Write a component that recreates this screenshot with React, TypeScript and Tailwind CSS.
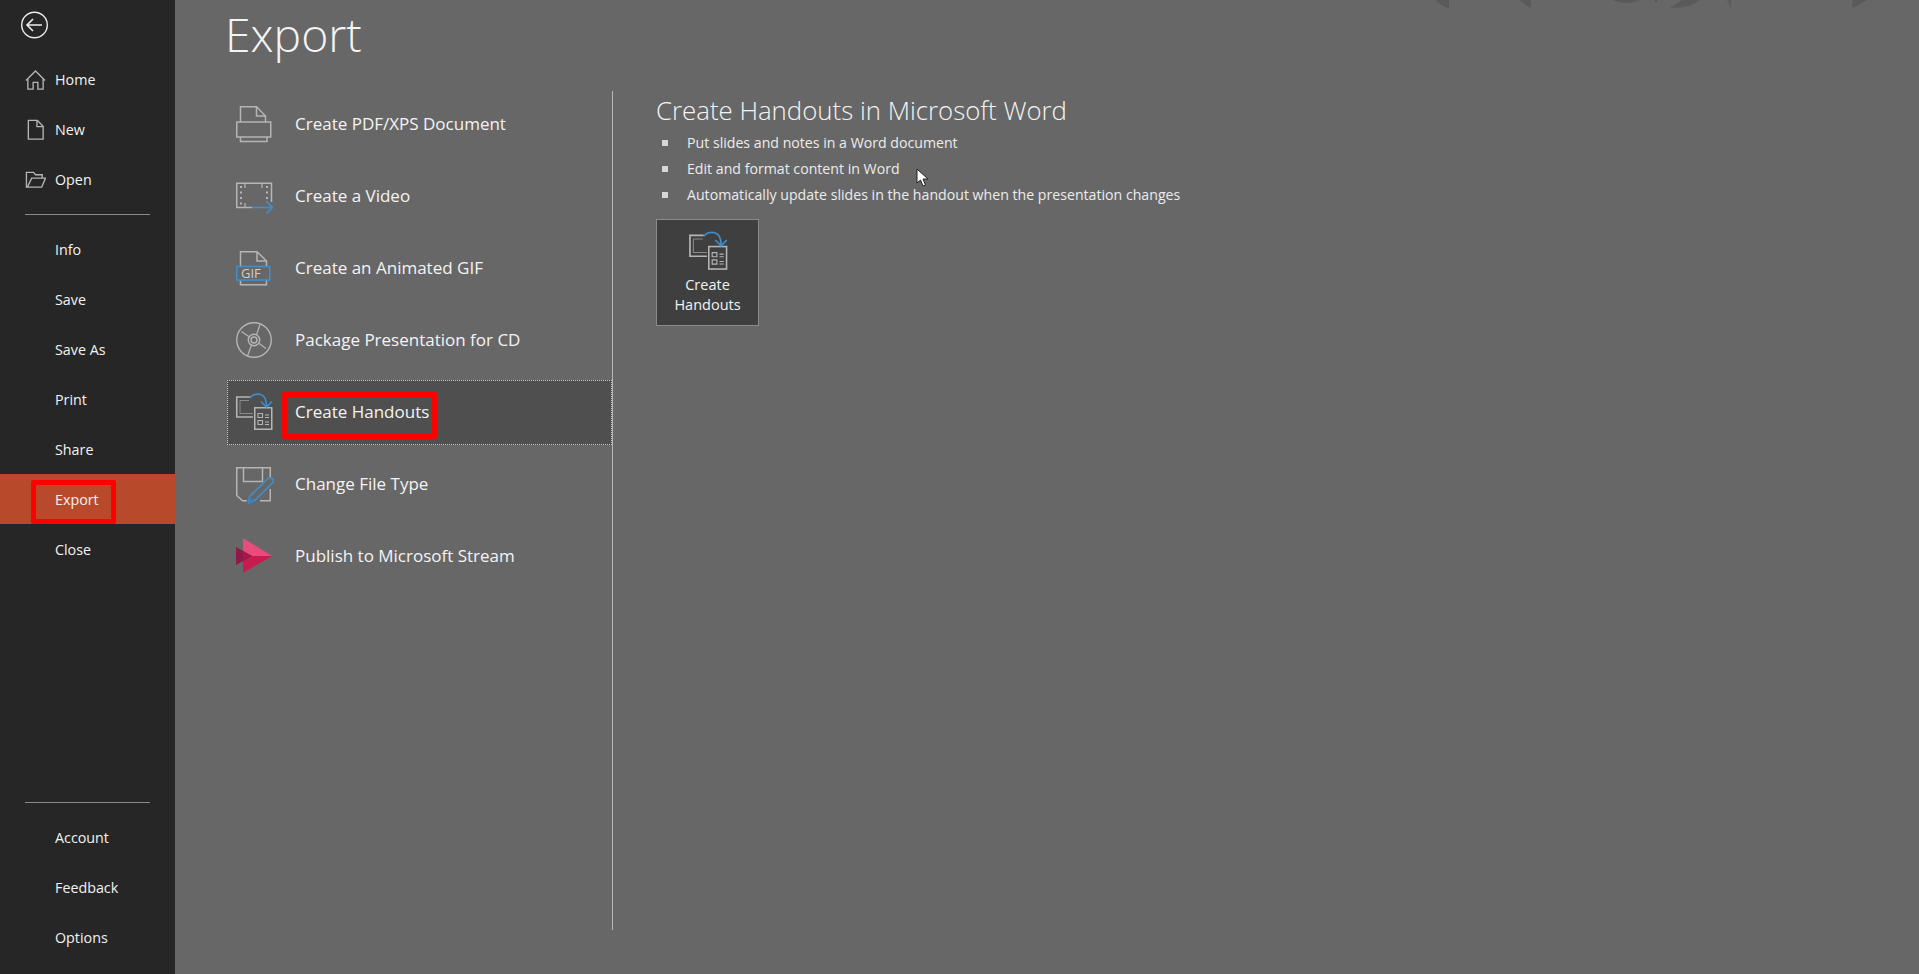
import React from "react";

const G = "#b5b5b5";
const B = "#3f8fcf";

function Printer() {
  return (
    <svg width="44" height="44" viewBox="0 0 44 44" fill="none" stroke={G} strokeWidth="1.5">
      <path d="M8.5 20V4.75H24.5L33.5 14V20" />
      <path d="M24.5 4.75V14H33.5" />
      <rect x="4.75" y="20" width="34" height="15" />
      <path d="M8.5 35V39.5H35V35" />
    </svg>
  );
}
function VideoIcon() {
  return (
    <svg width="44" height="44" viewBox="0 0 44 44" fill="none">
      <path d="M20 33.5H4.75V9.25H39.5V28" stroke={G} strokeWidth="1.5" />
      <path d="M9 12V31M35 12V27" stroke={G} strokeWidth="2" strokeDasharray="2 3.5" />
      <path d="M13 9.5V14M30 9.5V14M13 29V33" stroke={G} strokeWidth="1.2" />
      <path d="M20 33.5H40M34.5 27.5L40.5 33.5L34.5 39.5" stroke={B} strokeWidth="1.6" />
    </svg>
  );
}
function GifIcon() {
  return (
    <svg width="44" height="44" viewBox="0 0 44 44" fill="none">
      <path d="M8.5 20V5.75H25L34.5 15V20M8.5 34V38.75H34.5V34" stroke={G} strokeWidth="1.5" />
      <path d="M25 5.75V15H34.5" stroke={G} strokeWidth="1.5" />
      <rect x="4.75" y="20.5" width="33" height="13.5" stroke={B} strokeWidth="1.6" />
      <text x="9" y="32" fill="#d0d0d0" fontSize="13" fontFamily="'Open Sans', sans-serif">GIF</text>
    </svg>
  );
}
function CdIcon() {
  return (
    <svg width="44" height="44" viewBox="0 0 44 44" fill="none" stroke={G} strokeWidth="1.4">
      <circle cx="22" cy="22" r="17.25" />
      <circle cx="22" cy="22" r="5.75" />
      <circle cx="22" cy="22" r="3" />
      <path d="M9.5 13.5L17.5 19M26.5 25L34 30.5M24.5 17L28 6.5M19.5 27L15.5 38" strokeWidth="1.2" />
    </svg>
  );
}
function HandoutIcon({ size = 44 }: { size?: number }) {
  return (
    <svg width={size} height={size} viewBox="0 0 44 44" fill="none">
      <path d="M18 7H4.75V27H21" stroke={G} strokeWidth="1.6" />
      <path d="M8 10.5H17M8 10.5V23.5H21" stroke="#8a8a8a" strokeWidth="1" />
      <rect x="22.75" y="17.75" width="17" height="21.5" stroke={G} strokeWidth="1.5" />
      <path d="M26 23.5H30.5V27.5H26ZM26 30.5H30.5V34.5H26Z" stroke={G} strokeWidth="1.1" />
      <path d="M33 25H37M33 27.5H37M33 32H37M33 34.5H37" stroke={G} strokeWidth="1" />
      <path d="M18 8C20 4.5 25 3.5 28.5 4.5C32 5.5 34.5 9.5 34.5 16" stroke={B} strokeWidth="1.6" />
      <path d="M29 11.5L34.5 17L40 11.5" stroke={B} strokeWidth="1.6" />
    </svg>
  );
}
function FileTypeIcon() {
  return (
    <svg width="44" height="44" viewBox="0 0 44 44" fill="none">
      <path d="M15 38.75H10.5L4.75 33.5V5.75H38.25V15M38.25 27V38.75H28" stroke={G} strokeWidth="1.5" />
      <path d="M11.5 6V19.5H30.5V6" stroke={G} strokeWidth="1.5" />
      <path d="M17.5 34.5L36 16.5C38 15 40 16 41 17.5C41.8 19 41 20.5 40 21.5L22 39L16.5 41Z" stroke={B} strokeWidth="1.6" />
      <path d="M16 41.5L17.5 35.5L22.5 39.5Z" fill="#2f86cc" />
    </svg>
  );
}
function StreamIcon() {
  return (
    <svg width="44" height="44" viewBox="0 0 44 44">
      <path d="M11 4L40 22H11V13Z" fill="#e94b7d" />
      <path d="M11 39L40 22H11V31Z" fill="#c81c50" />
      <path d="M4 13L20 22L4 31Z" fill="#8f1a47" />
      <path d="M11 17L20 22L11 27Z" fill="#a01a4c" />
    </svg>
  );
}

const HomeIcon = () => (
  <svg width="21" height="22" viewBox="0 0 22 22" fill="none" stroke="#b5b5b5" strokeWidth="1.4">
    <path d="M1 11.5L11 1.5L21 11.5" />
    <path d="M3 10V20.5H8.5V13.5H13.5V20.5H19V10" />
  </svg>
);
const NewIcon = () => (
  <svg width="21" height="22" viewBox="0 0 22 22" fill="none" stroke="#b5b5b5" strokeWidth="1.4">
    <path d="M3.5 1H13L19 7V20.5H3.5Z" />
    <path d="M12.5 1V7.5H19" />
  </svg>
);
const OpenIcon = () => (
  <svg width="21" height="22" viewBox="0 0 22 22" fill="none" stroke="#b5b5b5" strokeWidth="1.4">
    <path d="M2.5 18.5H1.5V3H9L11 5.5H18V9" />
    <path d="M2.5 18.5L7 9H21.5L17.5 18.5Z" />
  </svg>
);

function NavItem({
  label,
  icon,
  active,
  lower,
}: {
  label: string;
  icon?: React.ReactNode;
  active?: boolean;
  lower?: boolean;
}) {
  return (
    <div
      className={`h-[50px] flex items-center text-[14.3px] text-[#f2f2f2] ${active ? "bg-[#b84a2b]" : ""} ${
        lower ? "pt-[2px]" : ""
      }`}
    >
      <div className="w-[55px] shrink-0 flex justify-end pr-[9px]">{icon}</div>
      <span>{label}</span>
    </div>
  );
}

function ExportItem({ label, icon, active }: { label: string; icon: React.ReactNode; active?: boolean }) {
  return (
    <div
      className={`flex items-center text-[17px] text-[#f4f4f4] ${
        active
          ? "h-[65px] mt-px pb-[2px] bg-[#4f4f4f] border border-dotted border-[#c8c8c8]"
          : "h-[66px]"
      }`}
    >
      <div className={`shrink-0 ${active ? "w-[67px] pl-[4px]" : "w-[68px] pl-[5px]"}`}>{icon}</div>
      <span>{label}</span>
    </div>
  );
}

export default function App() {
  return (
    <div
      className="relative w-[1919px] h-[974px] overflow-hidden flex bg-[#676767]"
      style={{ fontFamily: "'Open Sans', 'Noto Sans', sans-serif" }}
    >
      {/* Sidebar */}
      <aside className="w-[175px] shrink-0 h-full bg-[#262626] flex flex-col pb-[11px]">
        <div className="h-[54px] pl-[20px] pt-[10px]">
          <svg width="30" height="30" viewBox="0 0 30 30" fill="none" stroke="#ececec" strokeWidth="1.4">
            <circle cx="14.5" cy="15" r="12.8" />
            <path d="M7 15H22M13 9L7 15L13 21" strokeWidth="1.6" />
          </svg>
        </div>
        <NavItem label="Home" icon={<HomeIcon />} lower />
        <NavItem label="New" icon={<NewIcon />} lower />
        <NavItem label="Open" icon={<OpenIcon />} lower />
        <div className="h-px bg-[#8a8a8a] ml-[25px] w-[125px] mt-[10px] mb-[9px]" />
        <NavItem label="Info" lower />
        <NavItem label="Save" lower />
        <NavItem label="Save As" lower />
        <NavItem label="Print" lower />
        <NavItem label="Share" lower />
        <NavItem label="Export" active lower />
        <NavItem label="Close" lower />
        <div className="mt-auto h-px bg-[#8a8a8a] ml-[25px] w-[125px] mb-[10px]" />
        <NavItem label="Account" />
        <NavItem label="Feedback" />
        <NavItem label="Options" />
      </aside>

      {/* Main */}
      <main className="flex-1 flex flex-col">
        <h1 className="h-[91px] pl-[50px] pt-[2px] text-[46.3px] leading-[66px] font-light text-[#f4f4f4]">Export</h1>
        <div className="flex h-[839px]">
          <div className="ml-[52px] w-[386px] border-r border-[#b8b8b8] flex flex-col gap-[6px]">
            <ExportItem label="Create PDF/XPS Document" icon={<Printer />} />
            <ExportItem label="Create a Video" icon={<VideoIcon />} />
            <ExportItem label="Create an Animated GIF" icon={<GifIcon />} />
            <ExportItem label="Package Presentation for CD" icon={<CdIcon />} />
            <ExportItem label="Create Handouts" icon={<HandoutIcon />} active />
            <ExportItem label="Change File Type" icon={<FileTypeIcon />} />
            <ExportItem label="Publish to Microsoft Stream" icon={<StreamIcon />} />
          </div>
          <div className="pl-[43px] -mt-px">
            <h2 className="text-[25.8px] leading-[40px] font-light text-[#f4f4f4]">Create Handouts in Microsoft Word</h2>
            <ul className="text-[14.15px] text-[#ececec]">
              {[
                "Put slides and notes in a Word document",
                "Edit and format content in Word",
                "Automatically update slides in the handout when the presentation changes",
              ].map((t) => (
                <li key={t} className="h-[26px] flex items-center">
                  <span className="w-[6px] h-[6px] bg-[#d8d8d8] ml-[6px] mr-[19px] mb-[1px]" />
                  <span>{t}</span>
                </li>
              ))}
            </ul>
            <div className="mt-[11px] w-[103px] h-[107px] bg-[#3f3f3f] border border-[#8a8a8a] flex flex-col items-center text-[14.5px] leading-[20px] text-[#f2f2f2] pt-[8px]">
              <HandoutIcon size={46} />
              <span className="mt-[1px] text-center">
                Create
                <br />
                Handouts
              </span>
            </div>
          </div>
        </div>
      </main>

      {/* Red annotation boxes */}
      <div className="absolute left-[31px] top-[480px] w-[85px] h-[44px] border-[5px] border-[#ff0000] rounded-[2px]" />
      <div className="absolute left-[282px] top-[392px] w-[155px] h-[47px] border-[5px] border-[#ff0000] rounded-[2px]" />

      {/* Mouse cursor */}
      <svg className="absolute left-[916px] top-[168px]" width="14" height="20" viewBox="0 0 14 20">
        <path d="M1 1V15L4.5 12L7 18L9.5 17L7 11H12Z" fill="#fff" stroke="#222" strokeWidth="1" />
      </svg>

      {/* Faint decoration at top right */}
      <svg className="absolute left-[1400px] top-0" width="519" height="10" viewBox="0 0 519 10" fill="#5a5a5a">
        <path d="M36 0C39 4 43 7 49 8V0Z" />
        <path d="M120 0C123 3 126 6 131 8V0Z" />
        <path d="M213 0C220 4 232 4 240 0Z" />
        <path d="M254 0L256 3L258 0Z" />
        <path d="M270 8C285 8 295 5 300 0H282Z" />
        <path d="M327 0L331 8V0Z" />
        <path d="M452 8C458 5 463 3 467 0H453Z" />
      </svg>
    </div>
  );
}
